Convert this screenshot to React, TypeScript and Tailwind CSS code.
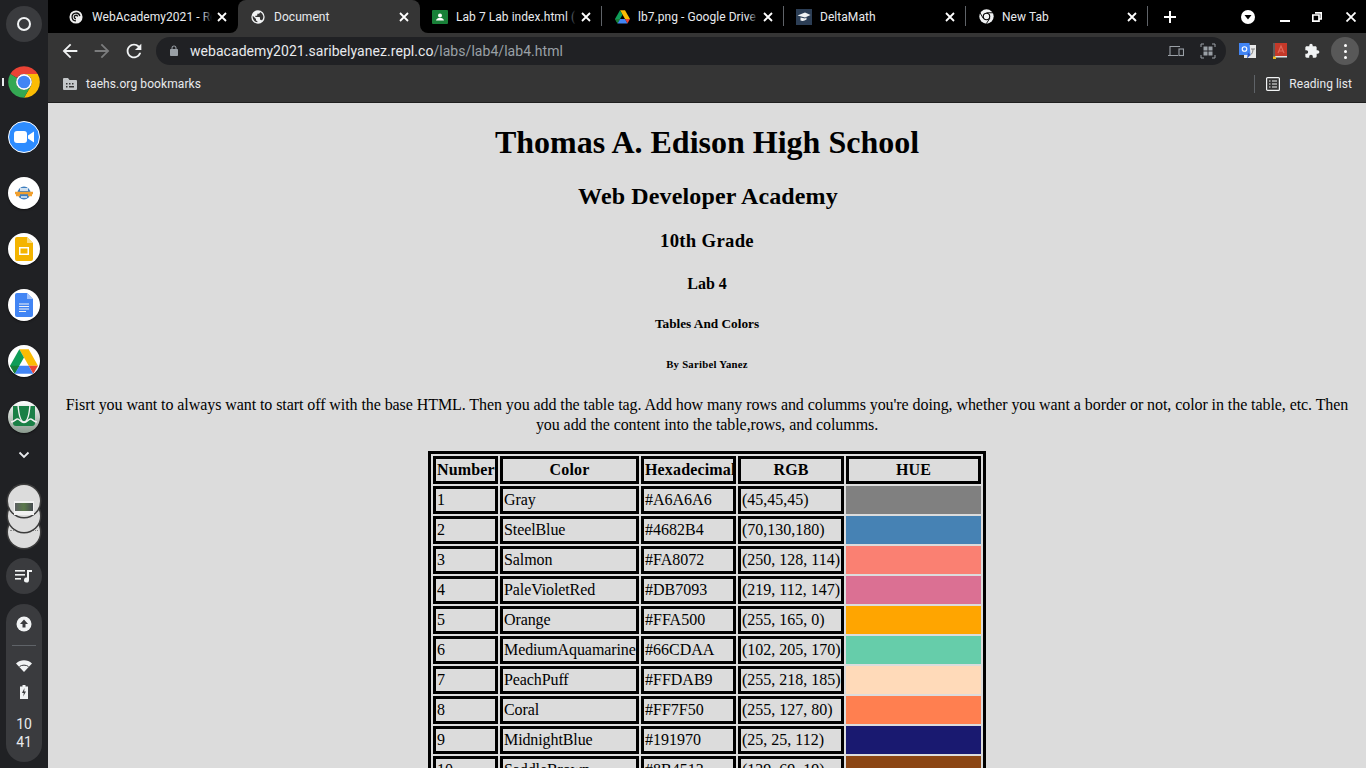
import React from "react";

const P = ({ d, size = 24, fill = "currentColor", className = "" }: { d: string; size?: number; fill?: string; className?: string }) => (
  <svg width={size} height={size} viewBox="0 0 24 24" fill={fill} className={className}><path d={d} /></svg>
);

const X = ({ size = 10 }: { size?: number }) => (
  <svg width={size} height={size} viewBox="0 0 10 10" className="shrink-0"><path d="M1 1l8 8M9 1l-8 8" stroke="#fff" strokeWidth="1.8" fill="none" /></svg>
);

const ChromeLogo = ({ size = 32 }: { size?: number }) => (
  <svg width={size} height={size} viewBox="0 0 48 48">
    <path d="M6.680 14A20 20 0 0 1 41.320 14L24 14A10 10 0 0 0 15.340 19Z" fill="#ea4335" />
    <path d="M41.320 14A20 20 0 0 1 24 44L32.660 29A10 10 0 0 0 24 14Z" fill="#fbbc04" />
    <path d="M24 44A20 20 0 0 1 6.680 14L15.340 19A10 10 0 0 0 32.660 29Z" fill="#34a853" />
    <circle cx="24" cy="24" r="10" fill="#fff" />
    <circle cx="24" cy="24" r="8" fill="#4285f4" />
  </svg>
);

const DriveLogo = ({ size = 16 }: { size?: number }) => (
  <svg width={size} height={size} viewBox="0 0 24 22">
    <path d="M8 1h8l8 14h-8z" fill="#fbbc04" />
    <path d="M8 1 0 15l4 7 8-14z" fill="#0f9d58" />
    <path d="M16 15H8l-4 7h16z" fill="#4285f4" />
    <path d="M24 15h-8l4 7z" fill="#ea4335" />
    <path d="M8 15H0l4 7z" fill="#188038" />
  </svg>
);

const Tab = ({ title, icon, active = false, sep = false }: { title: string; icon: React.ReactNode; active?: boolean; sep?: boolean }) => (
  <div className={`relative w-[182px] h-[33px] shrink-0 flex items-center pl-[12px] pr-[8px] text-[12px] text-[#e8eaed] ${active ? "bg-[#353535] rounded-t-[8px]" : ""}`}>
    <div className="w-[16px] h-[16px] flex items-center justify-center shrink-0">{icon}</div>
    <div className="relative ml-[8px] w-[120px] overflow-hidden whitespace-nowrap tracking-[0.05px]">
      {title}
      <div className={`absolute right-0 top-0 bottom-0 w-[10px] bg-gradient-to-l ${active ? "from-[#353535]" : "from-black"} to-transparent`} />
    </div>
    <div className="ml-auto mr-[3px]"><X /></div>
    {sep && <div className="absolute right-0 top-[6px] w-px h-[20px] bg-[#5f6368]" />}
    {active && <>
      <div className="absolute -left-[8px] bottom-0 w-[8px] h-[8px] bg-[#353535]"><div className="w-full h-full bg-black rounded-br-[8px]" /></div>
      <div className="absolute -right-[8px] bottom-0 w-[8px] h-[8px] bg-[#353535]"><div className="w-full h-full bg-black rounded-bl-[8px]" /></div>
    </>}
  </div>
);

const Spiral = () => (
  <svg width="14" height="14" viewBox="0 0 16 16"><circle cx="8" cy="8" r="7.500" fill="#eee" /><path d="M8 12.500a4.500 4.500 0 1 1 4.400-5.500M8 10a2 2 0 1 1 1.900-2.600" stroke="#111" strokeWidth="1.500" fill="none" /></svg>
);
const Globe = () => (
  <svg width="16" height="16" viewBox="0 0 24 24"><path fill="#f1f3f4" d="M12 2a10 10 0 1 0 0 20 10 10 0 0 0 0-20zm-1 17.930A8 8 0 0 1 4.200 10.200L9 15v1c0 1.100.9 2 2 2v1.930zm6.900-2.540A2 2 0 0 0 16 16h-1v-3c0-.55-.45-1-1-1H8v-2h2c.55 0 1-.45 1-1V7h2c1.100 0 2-.9 2-2v-.41a8 8 0 0 1 2.900 12.800z" /></svg>
);
const Classroom = () => (
  <svg width="16" height="16" viewBox="0 0 16 16"><rect width="16" height="14" y="1" rx="1" fill="#188038" /><circle cx="8" cy="6.500" r="2" fill="#fff" /><path d="M4 11.500c.5-2 2-2.500 4-2.500s3.500.5 4 2.500z" fill="#fff" /></svg>
);
const Delta = () => (
  <svg width="16" height="16" viewBox="0 0 16 16"><rect width="16" height="16" fill="#2c3e55" /><path d="M1.500 6.500 9 3.500l5.500 2.500L9 8.500z" fill="#f1f3f4" /><path d="M4.500 8.500v3c2 .8 4 .5 6-1V8.500L9 9.500z" fill="#f1f3f4" /></svg>
);
const ChromeMono = () => (
  <svg width="15" height="15" viewBox="0 0 48 48">
    <circle cx="24" cy="24" r="23" fill="#f1f3f4" />
    <circle cx="24" cy="24" r="12" fill="#000" />
    <circle cx="24" cy="24" r="8.500" fill="#f1f3f4" />
    <path d="M24 12h22M13.600 30 2.600 11M34.400 30 23.400 47" stroke="#000" strokeWidth="3" />
  </svg>
);

const Circle = ({ children, mt }: { children: React.ReactNode; mt: string }) => (
  <div className={`w-[32px] h-[32px] rounded-full bg-white flex items-center justify-center overflow-hidden shadow-[0_1px_2px_rgba(0,0,0,0.5)] ${mt}`}>{children}</div>
);

const Sidebar = () => (
  <div className="w-[48px] h-full shrink-0 bg-[#202124] flex flex-col items-center relative">
    <div className="mt-[6px] w-[36px] h-[36px] rounded-full bg-[#3a3b3e] flex items-center justify-center">
      <div className="w-[14px] h-[14px] rounded-full border-2 border-[#f1f3f4]" />
    </div>
    <div className="mt-[21px] h-[38px]"><ChromeLogo size={38} /></div>
    <div className="absolute left-[2px] top-[78px] w-[2px] h-[8px] bg-[#e8eaed]" />
    <div className="mt-[20px] w-[32px] h-[32px] rounded-full bg-[#2d8cff] border border-white flex items-center justify-center">
      <svg width="20" height="12" viewBox="0 0 20 12"><rect x="0" y="0" width="13" height="12" rx="3" fill="#fff" /><path d="M14 4.500 20 .5v11l-6-4z" fill="#fff" /></svg>
    </div>
    <Circle mt="mt-[24px]">
      <svg width="20" height="16" viewBox="0 0 20 16"><circle cx="10" cy="8" r="6.500" fill="#3f7fbf" /><rect x="6" y="3" width="8" height="3" fill="#cfe0f0" /><path d="M1 8h18M2 10h4M14 10h4" stroke="#f0a030" strokeWidth="2.400" /><rect x="7" y="11" width="6" height="2" fill="#bcd4ea" /></svg>
    </Circle>
    <Circle mt="mt-[24px]">
      <svg width="18" height="24" viewBox="0 0 18 24"><path d="M2 0h10l6 6v16a2 2 0 0 1-2 2H2a2 2 0 0 1-2-2V2a2 2 0 0 1 2-2z" fill="#f4b400" /><path d="M12 0l6 6h-6z" fill="#f9da7f" /><rect x="4" y="10" width="10" height="8" fill="#fff" /><rect x="5.500" y="11.500" width="7" height="5" fill="#f4b400" /></svg>
    </Circle>
    <Circle mt="mt-[24px]">
      <svg width="18" height="24" viewBox="0 0 18 24"><path d="M2 0h10l6 6v16a2 2 0 0 1-2 2H2a2 2 0 0 1-2-2V2a2 2 0 0 1 2-2z" fill="#4285f4" /><path d="M12 0l6 6h-6z" fill="#a1c2fa" /><path d="M4 11h10M4 13.500h10M4 16h10M4 18.500h7" stroke="#f1f3f4" strokeWidth="1" /></svg>
    </Circle>
    <Circle mt="mt-[24px]"><DriveLogo size={28} /></Circle>
    <div className="mt-[24px] w-[32px] h-[32px] rounded-full bg-gradient-to-b from-white to-[#8a9a8e] flex items-center justify-center overflow-hidden shadow-[0_1px_2px_rgba(0,0,0,0.5)]">
      <svg width="32" height="32" viewBox="0 0 32 32">
        <path d="M5 5h22v17a3 3 0 0 1-3 3H8a3 3 0 0 1-3-3z" fill="#1a8046" />
        <path d="M3 21c3.500 0 4.500-3 6.500-3s3.500 3.500 6.500 3.500 4.500-3.500 6.500-3.500 3 3 6.500 3" stroke="#f2f2f2" strokeWidth="1.600" fill="none" />
        <path d="M10 4c1 12 3 17 6 17s5-5 6-17" stroke="#f2f2f2" strokeWidth="1.400" fill="none" />
      </svg>
    </div>
    <div className="mt-[16px] h-[12px] flex items-center">
      <svg width="12" height="8" viewBox="0 0 12 8"><path d="M1.500 1.500 6 6l4.500-4.500" stroke="#e8eaed" strokeWidth="1.800" fill="none" /></svg>
    </div>
    <div className="mt-[24px] w-[32px] h-[63px] relative">
      <div className="absolute top-[31px] w-[32px] h-[32px] rounded-full bg-[#dcdcdc] shadow-[0_0_0_1.500px_#3c3c3c] flex items-start justify-center">
        <div className="mt-[14px] w-[28px] border-t border-dotted border-[#8a8a8a]" />
      </div>
      <div className="absolute top-[15px] w-[32px] h-[32px] rounded-full bg-[#dcdcdc] shadow-[0_0_0_1.500px_#3c3c3c]" />
      <div className="absolute top-0 w-[32px] h-[32px] rounded-full bg-[#dcdcdc] shadow-[0_0_0_1.500px_#3c3c3c] flex items-start justify-center">
        <div className="mt-[16px] w-[20px] h-[14px] bg-[#f1f1f1] flex justify-center pt-[2px]">
          <div className="w-[18px] h-[8px] bg-gradient-to-r from-[#5c5f62] via-[#5b7a4a] to-[#464a50]" />
        </div>
      </div>
    </div>
    <div className="mt-[10px] w-[36px] h-[36px] rounded-full bg-[#3a3b3e] flex items-center justify-center">
      <svg width="18" height="14" viewBox="0 0 18 14" fill="#f1f3f4"><rect x="0" y="1" width="10" height="1.600" /><rect x="0" y="5" width="10" height="1.600" /><rect x="0" y="9" width="6" height="1.600" /><path d="M12 1h5v2h-3v8a2.500 2.500 0 1 1-2-2.400z" /></svg>
    </div>
    <div className="mt-[10px] w-[36px] h-[158px] rounded-[18px] bg-[#3a3b3e] flex flex-col items-center">
      <svg className="mt-[12px] shrink-0" width="16" height="16" viewBox="0 0 16 16"><circle cx="8" cy="8" r="7.500" fill="#f1f3f4" /><path d="M8 3.500 12 8H9.500v3.500h-3V8H4z" fill="#3a3b3e" /></svg>
      <div className="mt-[13px] w-[24px] h-px bg-[#5f6368]" />
      <svg className="mt-[14px] shrink-0" width="16" height="12" viewBox="0 0 16 12"><path d="M0 3.500C4.500-.8 11.500-.8 16 3.500L8 12z" fill="#f1f3f4" /><path d="M3.500 6.500c2.500-1.800 6.500-1.800 9 0" stroke="#3a3b3e" strokeWidth="1" fill="none" /></svg>
      <svg className="mt-[13px] shrink-0" width="8" height="14" viewBox="0 0 8 14"><path d="M2.500 0h3v1.500H8V14H0V1.500h2.500z" fill="#f1f3f4" /><path d="M4.500 3 2 8h1.800L3.200 11.500 6 6.500H4.200z" fill="#3a3b3e" /></svg>
      <div className="mt-[16px] text-[14px] leading-[18px] text-[#e8eaed] text-center font-['Roboto',sans-serif]">10<br />41</div>
    </div>
  </div>
);

const Chrome = () => (
  <div className="shrink-0 font-['Roboto',sans-serif]">
    <div className="h-[33px] bg-black flex items-center pl-[8px] relative">
      <Tab title="WebAcademy2021 - Repl" icon={<Spiral />} />
      <Tab title="Document" icon={<Globe />} active />
      <Tab title="Lab 7 Lab index.html (" icon={<Classroom />} sep />
      <Tab title="lb7.png - Google Drive" icon={<DriveLogo size={15} />} sep />
      <Tab title="DeltaMath" icon={<Delta />} sep />
      <Tab title="New Tab" icon={<ChromeMono />} sep />
      <svg className="ml-[16px]" width="12" height="12" viewBox="0 0 12 12"><path d="M6 0v12M0 6h12" stroke="#fff" strokeWidth="2" /></svg>
      <svg className="ml-[65px]" width="14" height="14" viewBox="0 0 14 14"><circle cx="7" cy="7" r="7" fill="#fff" /><path d="M3.500 5h7L7 9.500z" fill="#000" /></svg>
      <div className="w-[10px] h-[2px] bg-white ml-[25px] mt-[9px]" />
      <svg className="ml-[22px]" width="10" height="10" viewBox="0 0 10 10"><path d="M3 .8h6.200V7H7M.8 3H7v6.200H.8z" stroke="#fff" strokeWidth="1.700" fill="none" /></svg>
      <svg className="ml-[24px]" width="10" height="10" viewBox="0 0 10 10"><path d="M.5.500l9 9M9.500.500l-9 9" stroke="#fff" strokeWidth="1.800" /></svg>
    </div>
    <div className="h-[33px] bg-[#353535] flex items-center pt-[3px] relative">
      <P className="ml-[11px] text-[#f1f3f4]" size={22} d="M20 11H7.830l5.590-5.590L12 4l-8 8 8 8 1.410-1.410L7.830 13H20v-2z" />
      <P className="ml-[10px] text-[#7b7c7d]" size={22} d="M12 4l-1.410 1.410L16.170 11H4v2h12.170l-5.580 5.590L12 20l8-8z" />
      <P className="ml-[10px] text-[#f1f3f4]" size={22} d="M17.650 6.350C16.200 4.900 14.210 4 12 4c-4.420 0-7.990 3.580-7.990 8s3.570 8 7.990 8c3.730 0 6.840-2.550 7.730-6h-2.080c-.82 2.330-3.040 4-5.650 4-3.310 0-6-2.690-6-6s2.690-6 6-6c1.660 0 3.140.690 4.220 1.780L13 11h7V4l-2.350 2.350z" />
      <div className="ml-[11px] w-[1070px] h-[28px] rounded-full bg-[#202124] flex items-center pl-[12px] text-[14px]">
        <P className="text-[#9aa0a6]" size={12} d="M18 8h-1V6c0-2.760-2.240-5-5-5S7 3.240 7 6v2H6c-1.100 0-2 .9-2 2v10c0 1.100.9 2 2 2h12c1.100 0 2-.9 2-2V10c0-1.100-.9-2-2-2zM9 6c0-1.660 1.340-3 3-3s3 1.340 3 3v2H9V6z" />
        <span className="ml-[10px] text-[#e8eaed] tracking-[0.05px]">webacademy2021.saribelyanez.repl.co<span className="text-[#9aa0a6]">/labs/lab4/lab4.html</span></span>
        <div className="ml-auto flex items-center">
          <svg width="16" height="12" viewBox="0 0 16 12" fill="none" stroke="#9aa0a6" strokeWidth="1.100"><path d="M2 10V1.500h10M0 10.500h10" /><rect x="11" y="4" width="4.500" height="6.500" /></svg>
          <svg className="ml-[16px] mr-[10px]" width="16" height="16" viewBox="0 0 16 16" fill="none"><path d="M1 4V1h3M12 1h3v3M15 12v3h-3M4 15H1v-3" stroke="#9aa0a6" strokeWidth="1" /><rect x="3.500" y="3.500" width="4" height="4" fill="#9aa0a6" /><rect x="8.500" y="3.500" width="4" height="4" fill="#9aa0a6" /><rect x="3.500" y="8.500" width="4" height="4" fill="#9aa0a6" /><rect x="8.500" y="8.500" width="4" height="4" fill="#9aa0a6" /></svg>
        </div>
      </div>
      <svg className="ml-[13px]" width="17" height="16" viewBox="0 0 17 16"><rect x="5" y="2" width="12" height="13" fill="#e8e8e8" /><path d="M0 0h10.500l1 12H0z" fill="#4285f4" /><path d="M9 9.500 11.500 12 8 15.500z" fill="#2a56c6" /><circle cx="5.500" cy="6" r="2.300" fill="none" stroke="#fff" strokeWidth="1.100" /><path d="M12 6h4M14 6c0 3-1 5-2.500 6" stroke="#777" strokeWidth=".9" fill="none" /></svg>
      <svg className="ml-[17px]" width="14" height="16" viewBox="0 0 14 16"><rect width="14" height="13" fill="#c53929" /><rect width="2" height="14" fill="#5b5b5b" /><rect x="2" y="13" width="12" height="1.500" fill="#dfe3e6" /><rect x="0" y="13.500" width="3" height="2.500" fill="#e8b923" /><path d="M5 10 8 3l3 7M6 8h4" stroke="#e06a5c" strokeWidth="1.100" fill="none" /></svg>
      <P className="ml-[17px] text-[#f1f3f4]" size={16} d="M20.500 11H19V7c0-1.100-.9-2-2-2h-4V3.500C13 2.120 11.880 1 10.500 1S8 2.120 8 3.500V5H4c-1.100 0-1.990.9-1.990 2v3.800H3.500c1.490 0 2.700 1.210 2.700 2.700s-1.210 2.700-2.700 2.700H2V20c0 1.100.9 2 2 2h3.800v-1.500c0-1.490 1.210-2.700 2.700-2.700 1.490 0 2.700 1.210 2.700 2.700V22H17c1.100 0 2-.9 2-2v-4h1.500c1.380 0 2.500-1.120 2.500-2.500S21.880 11 20.500 11z" />
      <div className="ml-[11px] w-[28px] h-[28px] rounded-full bg-[#585858] flex flex-col items-center justify-center gap-[3px]">
        <div className="w-[3px] h-[3px] rounded-full bg-white" /><div className="w-[3px] h-[3px] rounded-full bg-white" /><div className="w-[3px] h-[3px] rounded-full bg-white" />
      </div>
    </div>
    <div className="h-[37px] bg-[#353535] border-b border-[#1f1f1f] flex items-center text-[12px] text-[#e8eaed]">
      <svg className="ml-[15px]" width="14" height="12" viewBox="0 0 14 12"><path d="M0 1a1 1 0 0 1 1-1h4l1.500 2H13a1 1 0 0 1 1 1v8a1 1 0 0 1-1 1H1a1 1 0 0 1-1-1z" fill="#c4c7c9" /><path d="M3 5h1.500v1.500H3zM6 5h1.500v1.500H6zM9 5h1.500v1.500H9zM3 8h1.500v1.500H3zM6 8h5v1.500H6z" fill="#353535" /></svg>
      <span className="ml-[9px] tracking-[0.1px]">taehs.org bookmarks</span>
      <div className="ml-auto w-px h-[18px] bg-[#5f6368]" />
      <svg className="ml-[11px]" width="14" height="14" viewBox="0 0 14 14" fill="none" stroke="#f1f3f4"><rect x=".6" y=".6" width="12.800" height="12.800" rx="1" strokeWidth="1.200" /><path d="M3 4h1.500M6 4h5M3 7h1.500M6 7h5M3 10h1.500M6 10h5" strokeWidth="1.200" /></svg>
      <span className="ml-[9px] mr-[14px] tracking-[0.03px]">Reading list</span>
    </div>
  </div>
);

const rows: [string, string, string, string, string][] = [
  ["1", "Gray", "#A6A6A6", "(45,45,45)", "#808080"],
  ["2", "SteelBlue", "#4682B4", "(70,130,180)", "#4682b4"],
  ["3", "Salmon", "#FA8072", "(250, 128, 114)", "#fa8072"],
  ["4", "PaleVioletRed", "#DB7093", "(219, 112, 147)", "#db7093"],
  ["5", "Orange", "#FFA500", "(255, 165, 0)", "#ffa500"],
  ["6", "MediumAquamarine", "#66CDAA", "(102, 205, 170)", "#66cdaa"],
  ["7", "PeachPuff", "#FFDAB9", "(255, 218, 185)", "#ffdab9"],
  ["8", "Coral", "#FF7F50", "(255, 127, 80)", "#ff7f50"],
  ["9", "MidnightBlue", "#191970", "(25, 25, 112)", "#191970"],
  ["10", "SaddleBrown", "#8B4513", "(139, 69, 19)", "#8b4513"],
];

const th = "border-[3px] border-black p-[1px] font-bold text-center h-[28px] whitespace-nowrap tracking-[0.15px]";
const td = "border-[3px] border-black p-[1px] text-left h-[28px] whitespace-nowrap";

export default function App() {
  return (
    <div className="h-screen w-full flex overflow-hidden">
      <Sidebar />
      <div className="flex-1 min-w-0 flex flex-col">
        <Chrome />
        <div className="flex-1 min-h-0 overflow-hidden bg-[#dcdcdc] text-black px-[8px] text-center font-['Liberation_Serif',serif]">
          <h1 className="text-[32px] font-bold mt-[21.44px] leading-[37px]">Thomas A. Edison High School</h1>
          <h2 className="text-[24px] font-bold mt-[21.44px] leading-[27px] tracking-[0.14px] pl-[2px]">Web Developer Academy</h2>
          <h3 className="text-[18.72px] font-bold mt-[19.92px] leading-[21px] tracking-[0.3px]">10th Grade</h3>
          <h4 className="text-[16px] font-bold mt-[24.3px] leading-[18px]">Lab 4</h4>
          <h5 className="text-[13.28px] font-bold mt-[23.2px] leading-[15px]">Tables And Colors</h5>
          <h6 className="text-[10.72px] font-bold mt-[27px] leading-[12px] tracking-[0.25px]">By Saribel Yanez</h6>
          <p className="text-[16px] mt-[25px] mb-[16px] leading-[20px] tracking-[-0.075px]">Fisrt you want to always want to start off with the base HTML. Then you add the table tag. Add how many rows and columms you're doing, whether you want a border or not, color in the table, etc. Then you add the content into the table,rows, and columms.</p>
          <table className="mx-auto table-fixed w-[558px] border-separate [border-spacing:2px] border-[3px] border-black text-[16px] leading-[18px]">
            <thead>
              <tr>
                <th className={`${th} w-[65px]`}>Number</th>
                <th className={`${th} w-[139px]`}>Color</th>
                <th className={`${th} w-[95px]`}>Hexadecimal</th>
                <th className={`${th} w-[106px]`}>RGB</th>
                <th className={`${th} w-[135px]`}>HUE</th>
              </tr>
            </thead>
            <tbody>
              {rows.map((r) => (
                <tr key={r[0]}>
                  <td className={td}>{r[0]}</td>
                  <td className={`${td} tracking-[-0.1px]`}>{r[1]}</td>
                  <td className={td}>{r[2]}</td>
                  <td className={td}>{r[3]}</td>
                  <td className="p-0 h-[28px]" style={{ backgroundColor: r[4] }} />
                </tr>
              ))}
            </tbody>
          </table>
        </div>
      </div>
    </div>
  );
}
